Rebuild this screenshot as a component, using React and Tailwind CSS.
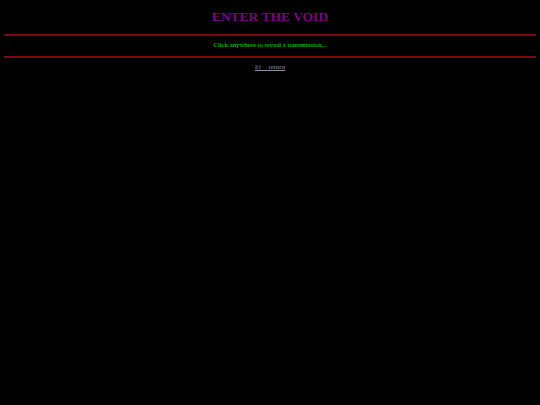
export default function App() {
  return (
    <div className="min-h-[405px] bg-black px-[4px] pt-[9px] text-center font-['Liberation_Serif',serif]">
      <h1 className="text-[13.5px] font-bold leading-[16px] text-[#800080]">ENTER THE VOID</h1>
      <hr className="mt-[9px] border-t-[2px] border-[#7a0a12]" />
      <p className="pt-[5px] pb-[7px] text-[6.75px] leading-[8px] text-[#00e000]">Click anywhere to reveal a transmission...</p>
      <hr className="border-t-[2px] border-[#7a0a12]" />
      <p className="mt-[5px] text-[7px] leading-[8px]">
        <a href="#" className="text-[#9a8aa0] underline">
          â†&nbsp;&nbsp;&nbsp;&nbsp;return
        </a>
      </p>
    </div>
  );
}
